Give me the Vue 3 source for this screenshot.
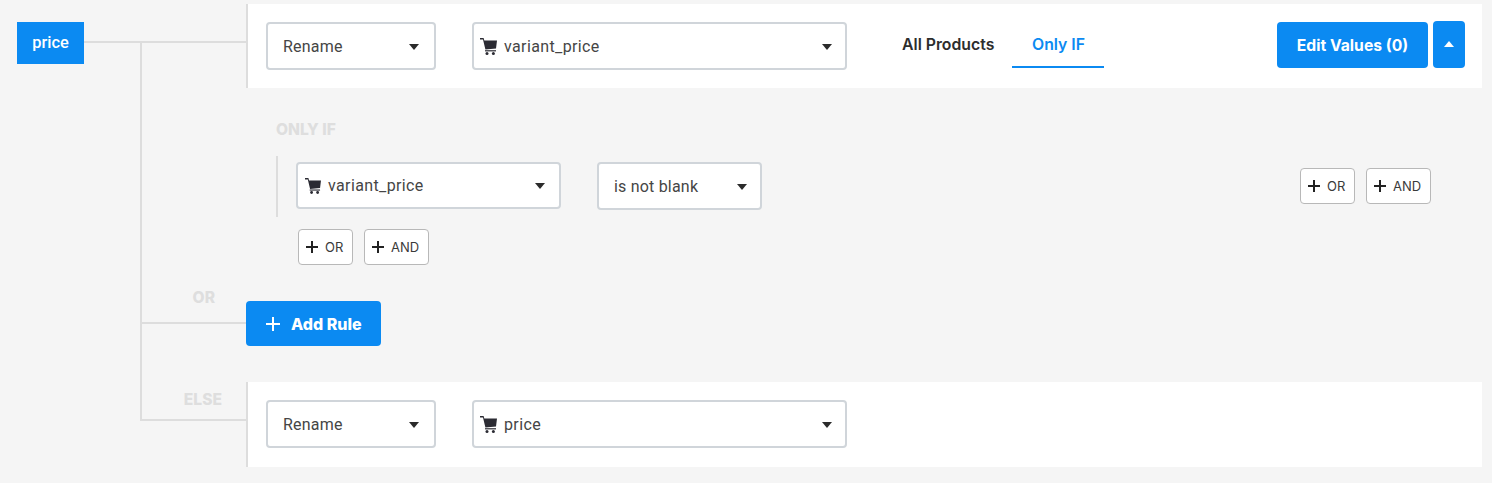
<script setup>
</script>

<template>
  <div class="tree">
    <span class="wire wire-top"></span>
    <span class="wire wire-trunk"></span>
    <span class="wire wire-or"></span>
    <span class="wire wire-else"></span>

    <div class="gutter gutter-top"><div class="tag">price</div></div>
    <section class="panel panel-top">
      <div class="select rename"><span class="value">Rename</span><i class="caret"></i></div>
      <div class="select field">
        <span class="value">
          <svg class="cart" viewBox="0 0 17 17"><path d="M0 0h3.6l.7 2.6H17l-1 8-10.6 1L3 1.6H0z" /><path d="M5 12.2h11v1.2H5z" /><circle cx="7" cy="15.4" r="1.5" /><circle cx="13.4" cy="15.4" r="1.5" /></svg>
          <span class="name">variant_price</span>
        </span>
        <i class="caret"></i>
      </div>
      <nav class="tabs">
        <a class="tab">All Products</a>
        <a class="tab active">Only IF</a>
      </nav>
      <div class="actions">
        <button class="edit">Edit Values (0)</button>
        <button class="collapse"><i class="caret-up"></i></button>
      </div>
    </section>

    <section class="only-if">
      <h4 class="label">ONLY IF</h4>
      <div class="rule-row">
        <div class="rule">
          <div class="select rule-field">
            <span class="value">
              <svg class="cart cart-sm" viewBox="0 0 17 17"><path d="M0 0h3.6l.7 2.6H17l-1 8-10.6 1L3 1.6H0z" /><path d="M5 12.2h11v1.2H5z" /><circle cx="7" cy="15.4" r="1.5" /><circle cx="13.4" cy="15.4" r="1.5" /></svg>
              <span class="name">variant_price</span>
            </span>
            <i class="caret"></i>
          </div>
          <div class="select operator"><span class="value">is not blank</span><i class="caret"></i></div>
        </div>
        <div class="logic logic-right">
          <button class="mini or"><span class="plus"></span>OR</button>
          <button class="mini and"><span class="plus"></span>AND</button>
        </div>
      </div>
      <div class="logic logic-below">
        <button class="mini or"><span class="plus"></span>OR</button>
        <button class="mini and"><span class="plus"></span>AND</button>
      </div>
    </section>

    <div class="gutter gutter-or"><span class="label">OR</span></div>
    <div class="add-row">
      <button class="add"><span class="plus plus-lg"></span>Add Rule</button>
    </div>

    <div class="gutter gutter-else"><span class="label">ELSE</span></div>
    <section class="panel panel-else">
      <div class="select rename"><span class="value">Rename</span><i class="caret"></i></div>
      <div class="select field">
        <span class="value">
          <svg class="cart" viewBox="0 0 17 17"><path d="M0 0h3.6l.7 2.6H17l-1 8-10.6 1L3 1.6H0z" /><path d="M5 12.2h11v1.2H5z" /><circle cx="7" cy="15.4" r="1.5" /><circle cx="13.4" cy="15.4" r="1.5" /></svg>
          <span class="name">price</span>
        </span>
        <i class="caret"></i>
      </div>
    </section>
  </div>
</template>

<style>
html, body { margin: 0; background: #f5f5f5; }
</style>

<style scoped>
.tree {
  position: relative;
  display: grid;
  grid-template-columns: 246px 1236px;
  grid-template-rows: 84px 213px 45px 121px;
  align-content: start;
  height: 483px;
  box-sizing: border-box;
  padding-top: 4px;
  background: #f5f5f5;
  font-family: Roboto, "Liberation Sans", sans-serif;
  color: #333;
}
.wire { position: absolute; background: #dddddd; }
.wire-top { left: 84px; top: 41px; width: 162px; height: 2px; }
.wire-trunk { left: 140px; top: 42px; width: 2px; height: 379px; }
.wire-or { left: 141px; top: 322px; width: 105px; height: 2px; }
.wire-else { left: 141px; top: 419px; width: 105px; height: 2px; }

.gutter { position: relative; }
.gutter-top { padding: 18px 0 0 17px; }
.tag {
  width: 67px;
  height: 42px;
  line-height: 41px;
  text-align: center;
  background: #0b8af2;
  color: #fff;
  font-size: 16.4px;
  font-weight: 500;
}
.panel {
  display: flex;
  align-items: flex-start;
  box-sizing: border-box;
  background: #fff;
  border-left: 2px solid #dddddd;
  padding: 18px 17px 0 18px;
}
.panel-else { margin-top: 36px; height: 85px; }

.select {
  box-sizing: border-box;
  display: flex;
  align-items: center;
  justify-content: space-between;
  height: 48px;
  background: #fff;
  border: 2px solid #d0d5da;
  border-radius: 4px;
  padding: 0 15px 0 15px;
  font-size: 16px;
  letter-spacing: .2px;
  color: #454545;
}
.value { display: flex; align-items: center; }
.name { letter-spacing: .38px; }
.rename { width: 170px; }
.field { width: 375px; margin-left: 36px; padding: 0 13px 0 6px; }
.rule-field { width: 265px; height: 47px; padding: 0 14px 0 7px; }
.operator { width: 165px; margin-left: 36px; padding-right: 13px; }
.caret {
  display: block;
  width: 0;
  height: 0;
  margin-top: 1px;
  border-left: 5px solid transparent;
  border-right: 5px solid transparent;
  border-top: 6px solid #2b2b2b;
}
.cart { width: 17px; height: 17px; margin-right: 7px; fill: #2b2b33; }
.cart-sm { width: 16px; height: 16px; }

.tabs { display: flex; margin-left: 55px; height: 46px; }
.tab {
  box-sizing: border-box;
  height: 46px;
  line-height: 46px;
  font-family: Inter, sans-serif;
  font-size: 15.8px;
  font-weight: 600;
  color: #2d2d2d;
}
.tab:first-child { width: 110px; }
.tab.active {
  width: 92px;
  padding-left: 20px;
  color: #0b8af2;
  border-bottom: 2px solid #0b8af2;
}
.actions { display: flex; align-items: flex-start; margin-left: auto; }
button { font-family: inherit; cursor: pointer; }
.edit {
  width: 151px;
  height: 46px;
  padding: 0;
  border: 0;
  border-radius: 4px;
  background: #0b8af2;
  color: #fff;
  font-family: Inter, sans-serif;
  font-size: 15.7px;
  font-weight: 700;
}
.collapse {
  display: flex;
  align-items: center;
  justify-content: center;
  width: 32px;
  height: 47px;
  margin: -1px 0 0 5px;
  padding: 0;
  border: 0;
  border-radius: 4px;
  background: #0b8af2;
}
.caret-up {
  display: block;
  width: 0;
  height: 0;
  margin-bottom: 2px;
  border-left: 5px solid transparent;
  border-right: 5px solid transparent;
  border-bottom: 6px solid #fff;
}

.only-if {
  grid-column: 1 / -1;
  box-sizing: border-box;
  padding: 32px 0 0 276px;
}
.label {
  margin: 0;
  font-family: Inter, sans-serif;
  font-size: 15.6px;
  line-height: 20px;
  font-weight: 800;
  color: #dedede;
}
.rule-row { position: relative; display: flex; margin-top: 16px; height: 61px; }
.rule {
  display: flex;
  box-sizing: border-box;
  height: 61px;
  padding: 6px 0 0 18px;
  border-left: 2px solid #dddddd;
}
.logic { display: flex; }
.logic-right { position: absolute; left: 1024px; top: 12px; }
.logic-below { margin: 12px 0 0 22px; }
.mini {
  display: flex;
  align-items: center;
  box-sizing: border-box;
  height: 36px;
  padding: 0 0 0 7px;
  background: #fff;
  border: 1px solid #b8b8b8;
  border-radius: 4px;
  font-family: Inter, sans-serif;
  font-size: 13px;
  color: #3a3a3a;
}
.or { width: 55px; }
.and { width: 65px; margin-left: 11px; }
.plus {
  display: block;
  width: 12px;
  height: 12px;
  margin-right: 7px;
  background:
    linear-gradient(#222, #222) center / 12px 2px no-repeat,
    linear-gradient(#222, #222) center / 2px 12px no-repeat;
}
.plus-lg {
  width: 14px;
  height: 14px;
  margin-right: 11px;
  background:
    linear-gradient(#fff, #fff) center / 14px 2px no-repeat,
    linear-gradient(#fff, #fff) center / 2px 14px no-repeat;
}

.gutter-or .label, .gutter-else .label { position: absolute; }
.gutter-or .label { top: -13px; right: 31px; }
.gutter-else .label { top: 44px; right: 24px; }
.add-row { display: flex; }
.add {
  display: flex;
  align-items: center;
  width: 135px;
  height: 45px;
  padding: 0 0 0 20px;
  border: 0;
  border-radius: 4px;
  background: #0b8af2;
  color: #fff;
  font-family: Inter, sans-serif;
  font-size: 16px;
  font-weight: 800;
}
</style>
